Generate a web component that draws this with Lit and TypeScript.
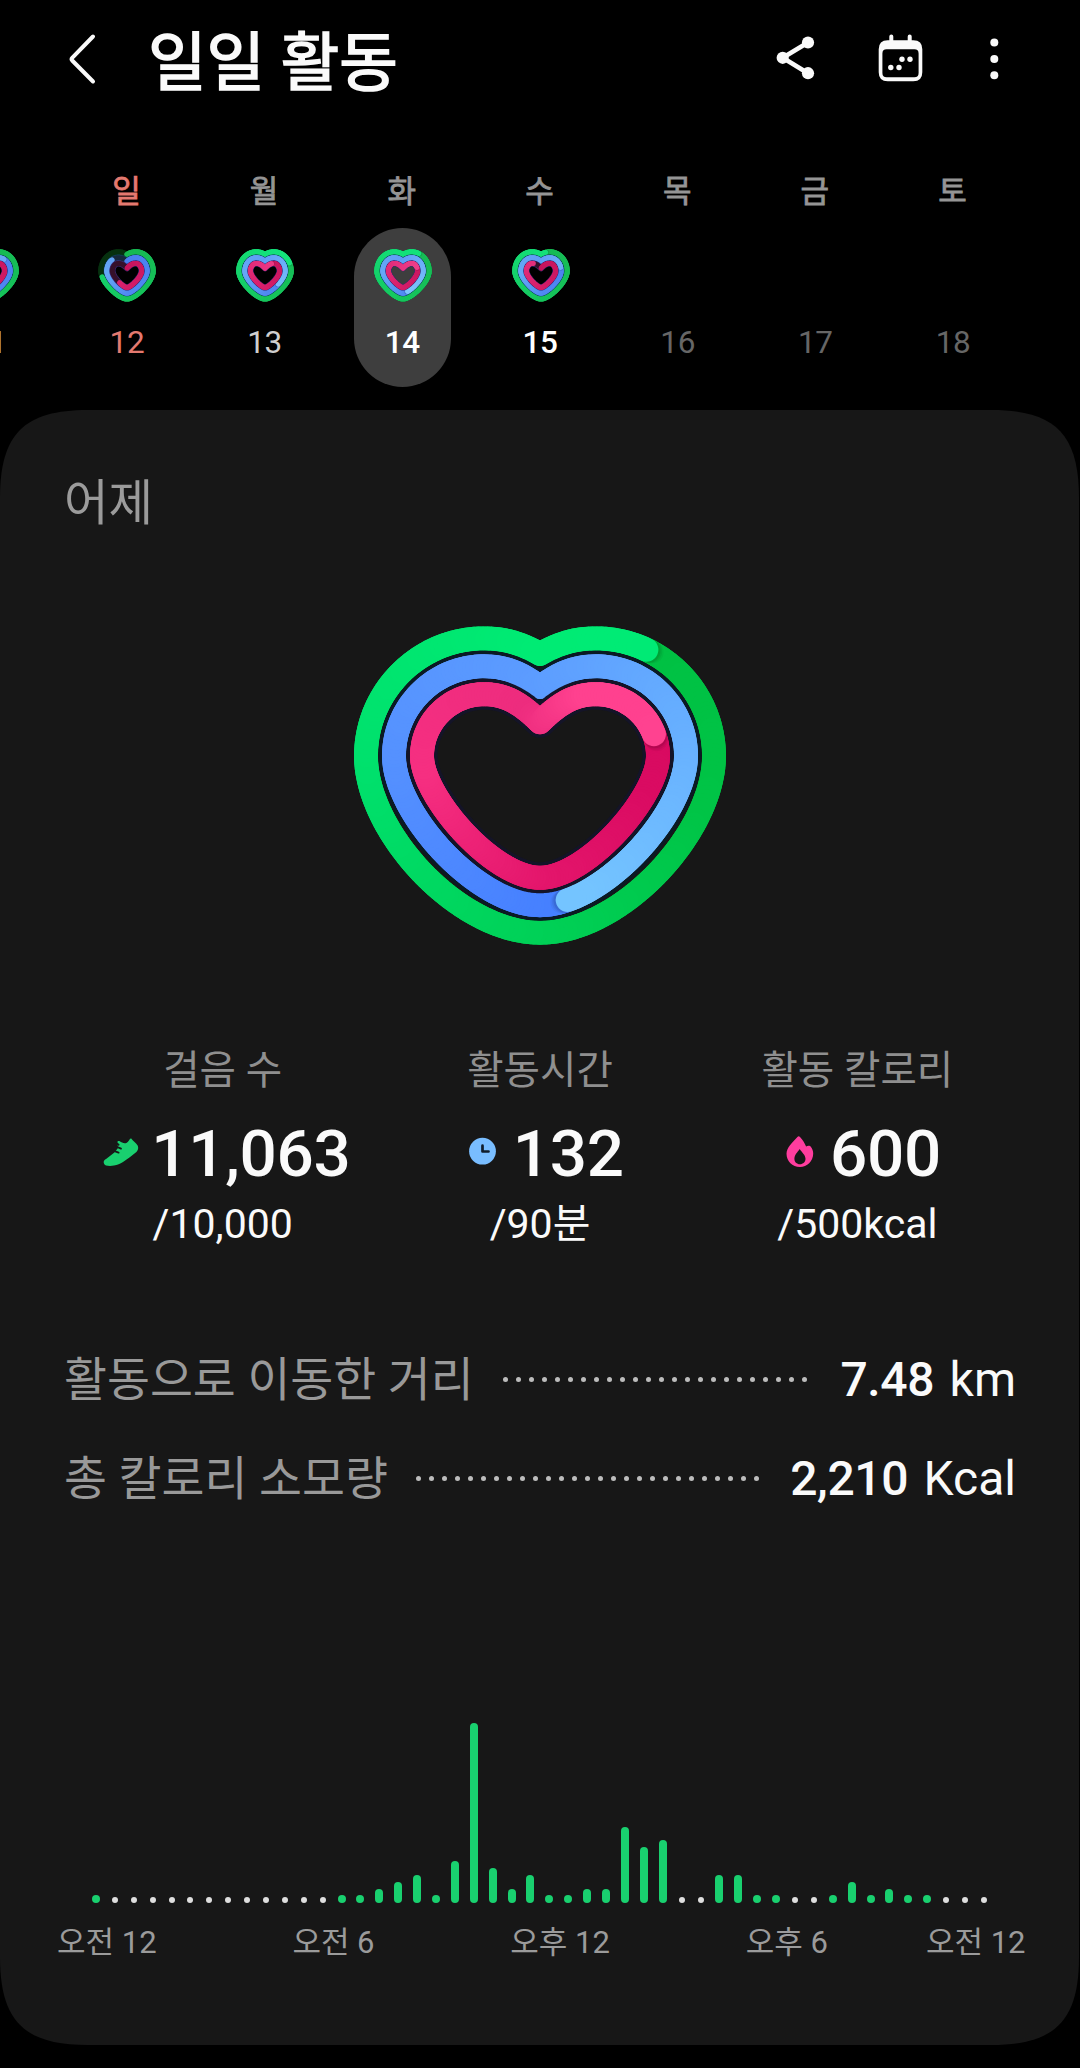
import { LitElement, html, svg, css } from "lit";
import { customElement, property } from "lit/decorators.js";
import { classMap } from "lit/directives/class-map.js";
import { styleMap } from "lit/directives/style-map.js";

type Pt = [number, number];
type Stop = [number, string];

interface HeartShape {
  cx: number;
  lobe: number;
  half: number;
  top: number;
  notch: number;
  side: number;
  bottom: number;
  drop: number;
  base: number;
}

function bezier(p: Pt[], t: number): Pt {
  const u = 1 - t;
  const k = [u * u * u, 3 * u * u * t, 3 * u * t * t, t * t * t];
  return [0, 1].map((i) => p.reduce((s, q, j) => s + q[i] * k[j], 0)) as Pt;
}

/* Points along the heart outline, clockwise from the notch, evenly spaced. */
function outline(h: HeartShape, count: number): Pt[] {
  const { lobe, half, top, notch, side, bottom, drop, base } = h;
  const rightSide: Pt[][] = [
    [[0, notch], [lobe * 0.36, notch - (notch - top) * 0.72], [lobe * 0.64, top], [lobe, top]],
    [[lobe, top], [lobe + (half - lobe) * 0.55, top], [half, side - (side - top) * 0.55], [half, side]],
    [[half, side], [half, side + (bottom - side) * drop], [half * base, bottom], [0, bottom]],
  ];
  const half1: Pt[] = [];
  for (const seg of rightSide) for (let i = 0; i < 60; i++) half1.push(bezier(seg, i / 60));
  half1.push([0, bottom]);
  const all = [...half1, ...half1.slice(0, -1).reverse().map(([x, y]) => [-x, y] as Pt)];
  const len = [0];
  for (let i = 1; i < all.length; i++)
    len.push(len[i - 1] + Math.hypot(all[i][0] - all[i - 1][0], all[i][1] - all[i - 1][1]));
  const total = len[len.length - 1];
  const out: Pt[] = [];
  let j = 1;
  for (let i = 0; i <= count; i++) {
    const d = (total * i) / count;
    while (j < len.length - 1 && len[j] < d) j++;
    const f = (d - len[j - 1]) / (len[j] - len[j - 1] || 1);
    out.push([
      h.cx + all[j - 1][0] + (all[j][0] - all[j - 1][0]) * f,
      all[j - 1][1] + (all[j][1] - all[j - 1][1]) * f,
    ]);
  }
  return out;
}

function mix(stops: Stop[], t: number): string {
  let i = 1;
  while (i < stops.length - 1 && stops[i][0] < t) i++;
  const [a, ca] = stops[i - 1];
  const [b, cb] = stops[i];
  const f = Math.max(0, Math.min(1, (t - a) / (b - a)));
  const ch = (c: string, n: number) => parseInt(c.slice(1 + n * 2, 3 + n * 2), 16);
  return `rgb(${[0, 1, 2].map((n) => Math.round(ch(ca, n) + (ch(cb, n) - ch(ca, n)) * f)).join(",")})`;
}

function line(points: Pt[]): string {
  return "M" + points.map(([x, y]) => `${x.toFixed(2)} ${y.toFixed(2)}`).join("L");
}

interface Ring {
  shape: HeartShape;
  width: number;
  progress: number;
  stops: Stop[];
  track: string;
  edge: string;
  edgeWidth: number;
}

function drawRing(r: Ring, steps: number) {
  const pts = outline(r.shape, steps);
  const last = Math.round(r.progress * steps);
  const from = Math.max(0, last - steps);
  const at = (i: number) => pts[((i % steps) + steps) % steps];
  const parts = [];
  const lead = Math.min(last - from, Math.round(steps * 0.1));
  const seg = (i: number) =>
    svg`<path d=${line([at(i), at(i + 1)])} stroke=${mix(r.stops, i / steps)} stroke-width=${r.width} />`;
  for (let i = from; i < last - lead; i++) parts.push(seg(i));
  if (r.progress > 1) {
    const [x, y] = at(last);
    const [px, py] = at(last - 2);
    const d = Math.hypot(x - px, y - py) || 1;
    for (const [off, rad, op] of [[0.1, 0.5, 0.08], [0.18, 0.49, 0.05], [0.27, 0.47, 0.04]]) {
      parts.push(svg`<circle cx=${x + ((x - px) / d) * r.width * off} cy=${y + ((y - py) / d) * r.width * off}
        r=${r.width * rad} fill="#000" stroke="none" opacity=${op} />`);
    }
  }
  for (let i = last - lead; i < last; i++) parts.push(seg(i));
  return svg`
    <path d=${line(pts) + "Z"} stroke=${r.edge} stroke-width=${r.edgeWidth} />
    <path d=${line(pts) + "Z"} stroke=${r.track} stroke-width=${r.width} />
    ${parts}`;
}

const GREEN: Stop[] = [[0, "#00bf41"], [0.3, "#00c446"], [0.5, "#00d056"], [0.75, "#00e06c"], [1, "#00eb74"], [1.2, "#00ea76"]];
const BLUE: Stop[] = [[0, "#3f78ff"], [0.5, "#4680ff"], [0.75, "#5490ff"], [1, "#5c9cff"], [1.2, "#66aeff"], [1.45, "#74c4ff"]];
const PINK: Stop[] = [[0, "#d3085c"], [0.3, "#da0b62"], [0.5, "#e3156b"], [0.75, "#f62f81"], [0.98, "#ed2c7e"], [1.08, "#ff418f"], [1.3, "#ff4290"]];

const MINI_GREEN: Stop[] = [[0, "#17b853"], [0.5, "#16c45c"], [1, "#14e07a"], [1.5, "#16e67e"]];
const MINI_BLUE: Stop[] = [[0, "#4a7ff0"], [0.5, "#5089f2"], [0.75, "#66a8f6"], [1, "#5f9ef6"], [1.45, "#7cc4fc"]];
const MINI_PINK: Stop[] = [[0, "#c4145c"], [0.5, "#d41d68"], [1, "#e83482"], [1.4, "#f24a90"]];

@customElement("activity-heart")
class ActivityHeart extends LitElement {
  @property({ attribute: false }) progress: number[] = [1, 1, 1];
  static styles = css`
    :host { display: block; line-height: 0; }
    svg { display: block; overflow: visible; }
  `;
  render() {
    const [g, b, p] = this.progress;
    return html`<svg width="400" height="350" viewBox="0 0 400 350" fill="none" stroke-linecap="round" stroke-linejoin="round">
      ${drawRing({ shape: { cx: 200, lobe: 56, half: 174, top: 28.4, notch: 44, side: 146, bottom: 322.7, drop: 0.43, base: 0.47 },
        width: 24, progress: g, stops: GREEN, track: "#073319", edge: "#171717", edgeWidth: 24 }, 240)}
      ${drawRing({ shape: { cx: 200, lobe: 56, half: 146, top: 56.3, notch: 77, side: 146, bottom: 295.2, drop: 0.385, base: 0.43 },
        width: 24, progress: b, stops: BLUE, track: "#16243c", edge: "#0a1a24", edgeWidth: 31 }, 240)}
      ${drawRing({ shape: { cx: 200, lobe: 56, half: 118, top: 84.2, notch: 112.3, side: 146, bottom: 267.8, drop: 0.33, base: 0.4 },
        width: 24, progress: p, stops: PINK, track: "#38102a", edge: "#141428", edgeWidth: 31 }, 240)}
    </svg>`;
  }
}

@customElement("mini-heart")
class MiniHeart extends LitElement {
  @property({ attribute: false }) progress: number[] = [1, 1, 1];
  static styles = css`
    :host { display: block; line-height: 0; }
    svg { display: block; }
  `;
  render() {
    const [g, b, p] = this.progress;
    return html`<svg width="58" height="53" viewBox="0 0 58 53" fill="none" stroke-linecap="round" stroke-linejoin="round">
      ${drawRing({ shape: { cx: 29, lobe: 8.8, half: 26.1, top: 2.9, notch: 5.4, side: 22, bottom: 49.9, drop: 0.4, base: 0.32 },
        width: 5.4, progress: g, stops: MINI_GREEN, track: "#06300f", edge: "#06300f", edgeWidth: 5.4 }, 96)}
      ${drawRing({ shape: { cx: 29, lobe: 8.8, half: 20.1, top: 8.8, notch: 12.3, side: 22, bottom: 44.1, drop: 0.38, base: 0.28 },
        width: 5.2, progress: b, stops: MINI_BLUE, track: "#16283c", edge: "#0f4560", edgeWidth: 6.6 }, 96)}
      ${drawRing({ shape: { cx: 29, lobe: 8.8, half: 14.6, top: 14.4, notch: 19.2, side: 22, bottom: 38.5, drop: 0.36, base: 0.25 },
        width: 4.9, progress: p, stops: MINI_PINK, track: "#36102a", edge: "#3a2a78", edgeWidth: 6.2 }, 96)}
    </svg>`;
  }
}

interface Day {
  name: string;
  date: string;
  rings?: number[];
  tone: "sunday" | "past" | "strong" | "future";
  selected?: boolean;
}

const DAYS: Day[] = [
  { name: "", date: "11", rings: [1.03, 1.12, 1.02], tone: "past" },
  { name: "일", date: "12", rings: [0.72, 0.86, 0.6], tone: "sunday" },
  { name: "월", date: "13", rings: [1.19, 1.36, 1.09], tone: "past" },
  { name: "화", date: "14", rings: [1.106, 1.46, 1.2], tone: "strong", selected: true },
  { name: "수", date: "15", rings: [1.03, 1.21, 0.9], tone: "strong" },
  { name: "목", date: "16", tone: "future" },
  { name: "금", date: "17", tone: "future" },
  { name: "토", date: "18", tone: "future" },
];

const shoe = svg`<svg class="icon" viewBox="0 0 36 36">
  <path fill="#19d06f" d="M28 4.2 C30 6.8 33.2 9 34.8 11.8 C35.6 14 35.2 16.4 33.4 18 C29 21.6 24.6 25 20 28 C17 30 14.4 31 11 31.6 C8 32 5 32 3 31.4 C1 30.6 .4 28.6 .8 27.2 C1.2 26 2.4 25.4 3.4 24.7 L11.4 18.6 L15 14 L14.4 8.4 C14.4 7 15.6 6.6 16.8 7.3 C18.6 8.6 20.8 9.6 23.4 9 C25.6 8.2 26 5 28 4.2Z" />
  <path stroke="#171717" stroke-width="1.8" stroke-linecap="round" fill="none" d="M9.6 16.4 L15.6 18.6 M12.6 12.2 L18 14.6 M13 8.6L15.6 10.8" />
</svg>`;

const clock = svg`<svg class="icon" viewBox="0 0 36 36">
  <circle cx="17.5" cy="17.2" r="13.4" fill="#79bdff" />
  <path stroke="#101c2a" stroke-width="2.7" stroke-linecap="round" stroke-linejoin="round" fill="none" d="M17.5 11.7 V17.5 H23.5" />
</svg>`;

const flame = svg`<svg class="icon" viewBox="0 0 36 36">
  <path fill="#ff3d9e" fill-rule="evenodd" d="M15.4 2.9 C16.2 2.1 17.2 2.1 18 3 C20.8 5.8 22.6 9 24.1 12.6 C25.3 11.6 27 11.4 28.4 12.2 C30.4 14.6 31.3 17 31.2 19.8 C31 27.6 25.2 33 17.9 33 C10.4 33 4.6 27.6 4.5 19.8 C4.6 13 10.6 8.2 15.4 2.9Z M17.7 15 C15.6 18 12.4 21 12.4 24.8 C12.4 28 14.8 30.3 17.9 30.3 C21 30.3 23.5 28 23.5 24.8 C23.5 21 19.6 18.2 17.7 15Z" />
</svg>`;

const STATS = [
  { label: "걸음 수", icon: shoe, value: "11,063", goal: "/10,000" },
  { label: "활동시간", icon: clock, value: "132", goal: "/90분" },
  { label: "활동 칼로리", icon: flame, value: "600", goal: "/500kcal" },
];

const TOTALS = [
  { label: "활동으로 이동한 거리", dots: 24, value: "7.48", unit: "km" },
  { label: "총 칼로리 소모량", dots: 27, value: "2,210", unit: "Kcal" },
];

/* Height of each half-hour bar in px; 0 is an idle slot. */
const BARS = [
  8, 0, 0, 0, 0, 0, 0, 0, 0, 0, 0, 0, 0, 8, 8, 14, 21, 28, 8, 41.7, 180.3, 35, 14, 28,
  8, 8, 14, 14, 76.3, 55.7, 62.7, 0, 0, 28, 28, 8, 8, 0, 0, 8, 21, 8, 14, 8, 8, 0, 0, 0,
];

const HOURS = ["오전 12", "오전 6", "오후 12", "오후 6", "오전 12"];

@customElement("app-root")
class AppRoot extends LitElement {
  static styles = css`
    :host {
      display: block;
      width: 1080px;
      height: 2068px;
      overflow: hidden;
      background: #000;
      color: #fafafa;
      font-family: Roboto, "Noto Sans CJK KR", sans-serif;
      white-space: nowrap;
    }
    .header { display: flex; height: 117px; align-items: center; padding: 0 75px 0 62px; box-sizing: border-box; }
    .header svg { display: block; }
    .title { flex: 1; margin: 10px 0 0 46px; font-size: 63.6px; line-height: 80px; font-weight: 400; -webkit-text-stroke: 1.7px #fafafa; }
    .actions { display: flex; align-items: center; }
    .week { display: grid; grid-template-columns: repeat(8, 137.7px); margin-left: -79.1px; padding-top: 55px; height: 293px; box-sizing: border-box; }
    .day { display: flex; flex-direction: column; align-items: center; }
    .name { font-size: 31px; line-height: 40px; height: 40px; font-weight: 400; -webkit-text-stroke: 0.8px currentColor; color: #959595; padding-right: 2px; }
    .pill { width: 97px; height: 159px; margin-top: 16px; border-radius: 49px; display: flex; flex-direction: column; align-items: center; padding-top: 21px; box-sizing: border-box; }
    .selected { background: #3e3e3e; }
    .ring { height: 53px; }
    .date { margin-top: 21px; font-size: 31.5px; letter-spacing: -0.3px; line-height: 40px; padding-right: 1px; }
    .sunday { color: #e4796f; }
    .past { color: #cfcfcf; }
    .strong { color: #fff; font-weight: 500; }
    .future { color: #666; }
    .card {
      height: 1635px; background: #171717; box-sizing: border-box; padding: 63.6px 64px 0;
      clip-path: path("M0 88 C0 24 24 0 88 0 H991 C1055 0 1079 24 1079 88 V1547 C1079 1611 1055 1635 991 1635 H88 C24 1635 0 1611 0 1547 Z");
    }
    .when { font-size: 48.5px; line-height: 60px; color: #9b9b9b; }
    .heart { display: flex; justify-content: center; margin-top: 76.4px; height: 350px; }
    .stats { display: grid; grid-template-columns: repeat(3, 1fr); margin-top: 86.2px; }
    .stat { display: flex; flex-direction: column; align-items: center; }
    .label { font-size: 39.6px; line-height: 50px; color: #8f8f8f; }
    .value { display: flex; align-items: center; gap: 12px; padding-left: 8.5px; margin-top: 22.4px; height: 70px; }
    .icon { display: block; width: 36px; height: 36px; margin-bottom: 4px; }
    .number { font-size: 65.6px; line-height: 70px; font-weight: 500; letter-spacing: -0.3px; }
    .goal { margin-top: 10.4px; font-size: 41px; line-height: 50px; }
    .totals { display: flex; flex-direction: column; gap: 39px; margin-top: 100.6px; }
    .total { display: flex; height: 60px; align-items: baseline; line-height: 60px; }
    .what { font-size: 46.7px; color: #999; }
    .leader { flex: 1; display: flex; align-self: center; justify-content: center; gap: 8px; padding-right: 4px; }
    .dot { width: 5px; height: 5px; border-radius: 50%; background: #bdbdbd; }
    .amount { font-size: 48px; font-weight: 500; letter-spacing: -0.4px; }
    .unit { font-weight: 400; letter-spacing: 0; margin-left: 4px; }
    .bars { display: flex; align-items: flex-end; justify-content: space-between; height: 181px; margin: 213.4px 28px 0; }
    .slot { width: 8px; display: flex; justify-content: center; align-items: flex-end; }
    .bar { width: 8px; border-radius: 4px; background: #19d06f; }
    .idle { width: 6px; height: 6px; border-radius: 50%; background: #dedede; }
    .hours { display: grid; grid-template-columns: repeat(4, 226.65px) 151.3px; margin: 22.2px 0 0 -70.5px; }
    .hour { text-align: center; font-size: 31px; line-height: 36px; color: #9b9b9b; }
  `;

  render() {
    return html`
      <div class="header">
        <svg width="40" height="60" viewBox="62 28.5 40 60" fill="none" stroke="#fafafa" stroke-width="4" stroke-linecap="round" stroke-linejoin="round">
          <path d="M93 36 L72.2 57.3 Q71 58.6 72.2 60 L93 81" />
        </svg>
        <div class="title">일일 활동</div>
        <div class="actions">
          <svg width="60" height="60" viewBox="766 28.5 60 60" fill="#fafafa">
            <path d="M808 42 L782.7 57.3 L808 72.7" fill="none" stroke="#fafafa" stroke-width="4.6" />
            <circle cx="808" cy="42" r="6.1" /><circle cx="782.7" cy="57.3" r="6.1" /><circle cx="808" cy="72.7" r="6.1" />
          </svg>
          <svg width="148" height="60" viewBox="826 28.5 148 60" fill="#fafafa">
            <path fill-rule="evenodd" d="M887.7 39.7 H913.3 Q922.3 39.7 922.3 48.7 V71.7 Q922.3 80.7 913.3 80.7 H887.7 Q878.7 80.7 878.7 71.7 V48.7 Q878.7 39.7 887.7 39.7Z M886.6 48.7 Q882.4 48.7 882.4 52.9 V72.4 Q882.4 76.7 886.6 76.7 H914.4 Q918.6 76.7 918.6 72.4 V52.9 Q918.6 48.7 914.4 48.7Z" />
            <path d="M891.3 36 V42 M909.7 36 V42" stroke="#fafafa" stroke-width="4" stroke-linecap="round" />
            <circle cx="902" cy="58.7" r="2.7" /><circle cx="910" cy="58.7" r="2.7" /><circle cx="890.8" cy="67" r="2.7" /><circle cx="899" cy="67" r="2.7" />
          </svg>
          <svg width="31" height="60" viewBox="974 28.5 31 60" fill="#fafafa">
            <circle cx="994.3" cy="42" r="4" /><circle cx="994.3" cy="58.4" r="4" /><circle cx="994.3" cy="74.8" r="4" />
          </svg>
        </div>
      </div>
      <div class="week">
        ${DAYS.map((d) => html`<div class="day">
          <div class=${classMap({ name: true, sunday: d.tone === "sunday" })}>${d.name}</div>
          <div class=${classMap({ pill: true, selected: !!d.selected })}>
            <div class="ring">${d.rings ? html`<mini-heart .progress=${d.rings}></mini-heart>` : ""}</div>
            <div class="date ${d.tone}">${d.date}</div>
          </div>
        </div>`)}
      </div>
      <div class="card">
        <div class="when">어제</div>
        <div class="heart"><activity-heart .progress=${[1.11, 1.467, 1.203]}></activity-heart></div>
        <div class="stats">
          ${STATS.map((s) => html`<div class="stat">
            <div class="label">${s.label}</div>
            <div class="value">${s.icon}<span class="number">${s.value}</span></div>
            <div class="goal">${s.goal}</div>
          </div>`)}
        </div>
        <div class="totals">
          ${TOTALS.map((t) => html`<div class="total">
            <span class="what">${t.label}</span>
            <span class="leader">${Array.from({ length: t.dots }, () => html`<i class="dot"></i>`)}</span>
            <span class="amount">${t.value} <span class="unit">${t.unit}</span></span>
          </div>`)}
        </div>
        <div class="bars">
          ${BARS.map((h) => html`<div class="slot">${h
            ? html`<div class="bar" style=${styleMap({ height: `${h}px` })}></div>`
            : html`<div class="idle"></div>`}</div>`)}
        </div>
        <div class="hours">${HOURS.map((h) => html`<div class="hour">${h}</div>`)}</div>
      </div>
    `;
  }
}
